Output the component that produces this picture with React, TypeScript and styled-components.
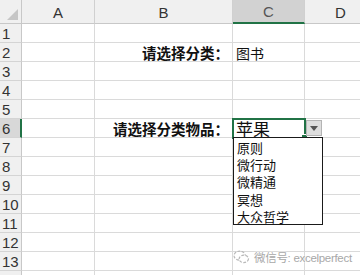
import styled, { createGlobalStyle } from "styled-components";

const GlobalStyle = createGlobalStyle`
    html, body {
        margin: 0;
        padding: 0;
        background: #ffffff;
        overflow: hidden;
    }
`;

const COLUMNS = ["A", "B", "C", "D"];
const ROW_COUNT = 14;
const SELECTED_COL = "C";
const SELECTED_ROW = 6;

const cellText: Record<string, { text: string; variant: "label" | "value" | "input" }> = {
    B2: { text: "请选择分类：", variant: "label" },
    C2: { text: "图书", variant: "value" },
    B6: { text: "请选择分类物品：", variant: "label" },
    C6: { text: "苹果", variant: "input" },
};

const options = ["原则", "微行动", "微精通", "冥想", "大众哲学"];

const App = () => {
    const rows = Array.from({ length: ROW_COUNT }, (_, i) => i + 1);

    return (
        <>
            <GlobalStyle />
            <Sheet>
                <Grid>
                    <Corner>
                        <CornerMark />
                    </Corner>
                    {COLUMNS.map((col) => (
                        <ColHeader key={col} $active={col === SELECTED_COL}>
                            {col}
                        </ColHeader>
                    ))}
                    {rows.map((row) => (
                        <Row key={row}>
                            <RowHeader $active={row === SELECTED_ROW}>{row}</RowHeader>
                            {COLUMNS.map((col) => {
                                const id = `${col}${row}`;
                                const content = cellText[id];
                                return (
                                    <Cell
                                        key={id}
                                        $selected={id === `${SELECTED_COL}${SELECTED_ROW}`}
                                        $align={content?.variant === "label" ? "right" : "left"}
                                    >
                                        {content && (
                                            <CellText $variant={content.variant}>{content.text}</CellText>
                                        )}
                                    </Cell>
                                );
                            })}
                        </Row>
                    ))}
                </Grid>

                <DropButton>
                    <svg width="8" height="5" viewBox="0 0 8 5">
                        <path d="M0 0 L8 0 L4 5 Z" fill="#555" />
                    </svg>
                </DropButton>

                <DropList>
                    {options.map((opt) => (
                        <DropItem key={opt}>{opt}</DropItem>
                    ))}
                </DropList>

                <Watermark>
                    <svg width="17" height="14" viewBox="0 0 18 15">
                        <ellipse cx="7" cy="6" rx="6" ry="4.8" fill="none" stroke="#b8b8b8" strokeWidth="1.3" strokeDasharray="3 1.5" />
                        <ellipse cx="11.5" cy="9.5" rx="5" ry="4" fill="#fff" stroke="#b8b8b8" strokeWidth="1.3" strokeDasharray="3 1.5" />
                    </svg>
                    <span>微信号: excelperfect</span>
                </Watermark>
            </Sheet>
        </>
    );
};

const Sheet = styled.div`
    position: relative;
    width: 360px;
    height: 275px;
    overflow: hidden;
    background: #ffffff;
`;

const Grid = styled.div`
    display: grid;
    grid-template-columns: 22px 73px 138px 72px 72px;
    grid-template-rows: 24px repeat(${ROW_COUNT}, 19px);
`;

const Row = styled.div`
    display: contents;
`;

const HeaderBase = styled.div`
    box-sizing: border-box;
    background: #f0f0f0;
    color: #444444;
    font-family: "Liberation Sans", "Noto Sans", sans-serif;
    font-size: 15px;
    display: flex;
    align-items: center;
`;

const Corner = styled(HeaderBase)`
    position: relative;
    border-right: 1px solid #c8c8c8;
    border-bottom: 1px solid #c8c8c8;
`;

const CornerMark = styled.div`
    position: absolute;
    right: 3px;
    bottom: 3px;
    width: 0;
    height: 0;
    border-left: 11px solid transparent;
    border-bottom: 11px solid #c6c6c6;
`;

const ColHeader = styled(HeaderBase)<{ $active?: boolean }>`
    justify-content: center;
    padding-top: 1px;
    border-right: 1px solid #d0d0d0;
    border-bottom: ${(p) => (p.$active ? "2px solid #217346" : "1px solid #c8c8c8")};
    background: ${(p) => (p.$active ? "#d2d2d2" : "#f0f0f0")};
    color: ${(p) => (p.$active ? "#555" : "#333")};
    font-weight: 400;
`;

const RowHeader = styled(HeaderBase)<{ $active?: boolean }>`
    padding-left: 2px;
    border-bottom: 1px solid #d4d4d4;
    border-right: ${(p) => (p.$active ? "2px solid #217346" : "1px solid #c8c8c8")};
    background: ${(p) => (p.$active ? "#d8d8d8" : "#f0f0f0")};
    color: #333;
`;

const Cell = styled.div<{ $selected?: boolean; $align: "left" | "right" }>`
    position: relative;
    box-sizing: border-box;
    border-right: 1px solid #dadada;
    border-bottom: 1px solid #dadada;
    display: flex;
    align-items: center;
    justify-content: ${(p) => (p.$align === "right" ? "flex-end" : "flex-start")};
    padding: 0 3px;
    overflow: visible;
    white-space: nowrap;

    ${(p) =>
        p.$selected &&
        `
        outline: 2px solid #217346;
        outline-offset: -1px;
        z-index: 2;

        &::after {
            content: "";
            position: absolute;
            right: -4px;
            bottom: -4px;
            width: 5px;
            height: 5px;
            background: #217346;
            border: 1px solid #fff;
        }
    `}
`;

const CellText = styled.span<{ $variant: "label" | "value" | "input" }>`
    font-family: "Noto Sans CJK SC", "Noto Sans", sans-serif;
    color: #111;
    font-size: ${(p) => (p.$variant === "input" ? "17px" : p.$variant === "label" ? "14.5px" : "14px")};
    font-weight: ${(p) => (p.$variant === "label" ? 600 : 400)};
    line-height: 1;
    margin-top: ${(p) => (p.$variant === "input" ? "0" : "2px")};
`;

const DropButton = styled.div`
    position: absolute;
    left: 306px;
    top: 120px;
    width: 16px;
    height: 16px;
    box-sizing: border-box;
    background: #dedede;
    border: 1px solid #b4b4b4;
    display: flex;
    align-items: center;
    justify-content: center;
    z-index: 3;
`;

const DropList = styled.div`
    position: absolute;
    left: 233px;
    top: 137px;
    width: 90px;
    height: 88px;
    box-sizing: border-box;
    background: #ffffff;
    border: 1px solid #1a1a1a;
    padding: 1px 0 0 3px;
    display: flex;
    flex-direction: column;
    z-index: 3;
`;

const DropItem = styled.div`
    font-family: "Noto Sans CJK SC", "Noto Sans", sans-serif;
    font-size: 13px;
    line-height: 17.2px;
    color: #111;
`;

const Watermark = styled.div`
    position: absolute;
    left: 233px;
    top: 249px;
    display: flex;
    align-items: center;
    gap: 4px;
    white-space: nowrap;
    font-family: "Liberation Sans", "Noto Sans CJK SC", sans-serif;
    font-size: 11.5px;
    letter-spacing: -0.3px;
    color: #a8a8a8;
    text-shadow: 0 0 2px #fff, 0 0 2px #fff;
    z-index: 4;
`;

export default App;
